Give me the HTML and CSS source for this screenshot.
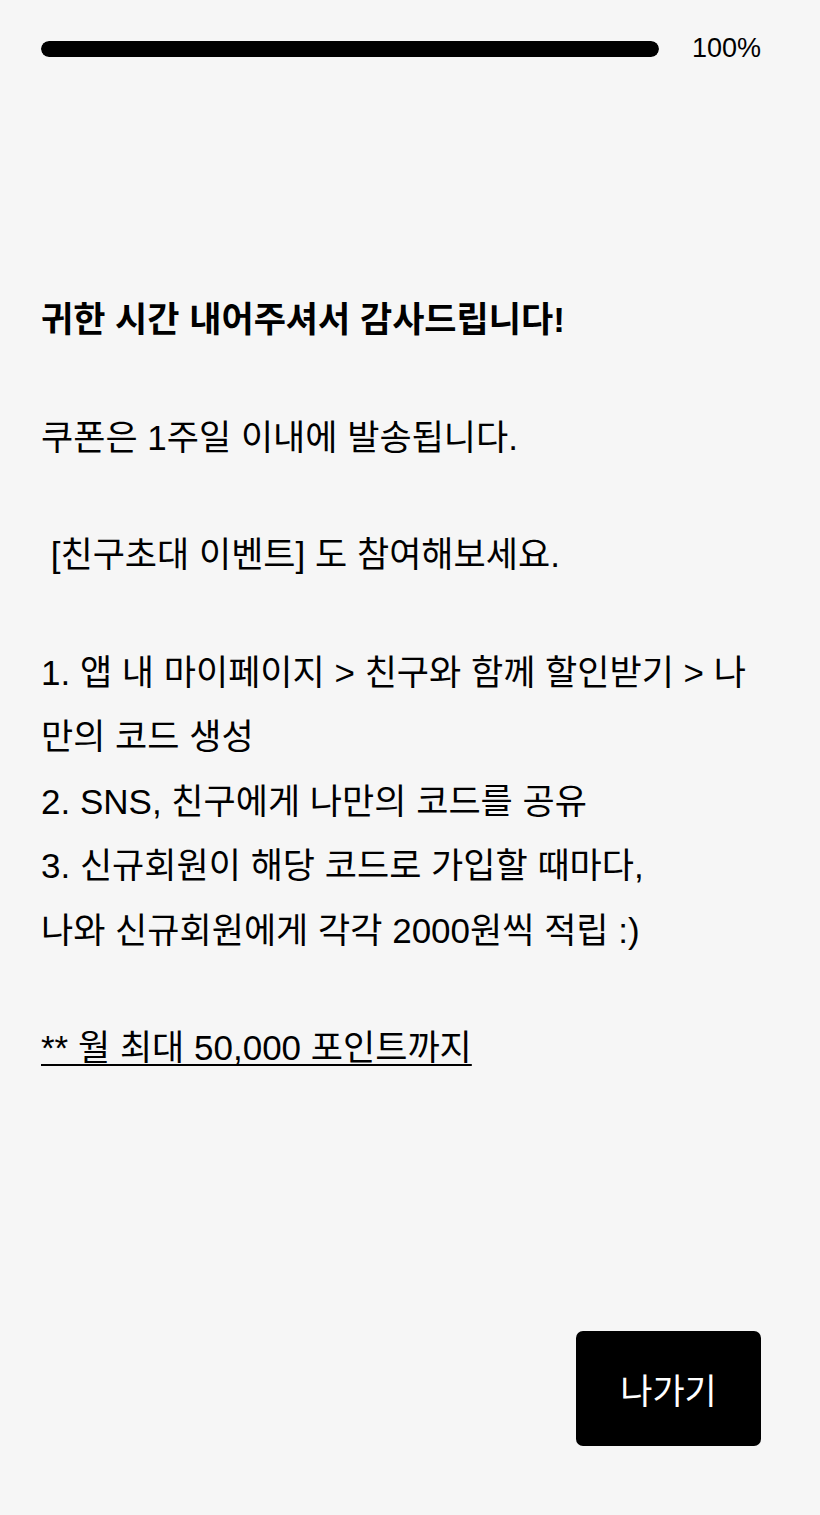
FILE: index.html
```html
<!DOCTYPE html>
<html lang="ko">
<head>
<meta charset="utf-8">
<title>완료</title>
<link rel="stylesheet" href="styles.css">
</head>
<body>
<div class="page">
  <div class="progress">
    <div class="track"><div class="fill" style="width:100%"></div></div>
    <span class="pct">100%</span>
  </div>

  <div class="content">
    <h1 class="title">귀한 시간 내어주셔서 감사드립니다!</h1>
    <p class="para">쿠폰은 1주일 이내에 발송됩니다.</p>
    <p class="para">&nbsp;[친구초대 이벤트] 도 참여해보세요.</p>
    <p class="para">1. 앱 내 마이페이지 &gt; 친구와 함께 할인받기 &gt; 나만의 코드 생성<br>2. SNS, 친구에게 나만의 코드를 공유<br>3. 신규회원이 해당 코드로 가입할 때마다,<br>나와 신규회원에게 각각 2000원씩 적립 :)</p>
    <p class="para note">** 월 최대 50,000 포인트까지</p>
  </div>

  <div class="actions">
    <button class="exit" type="button">나가기</button>
  </div>
</div>
</body>
</html>
```

FILE: styles.css
```css
html, body {
  margin: 0;
  padding: 0;
  background: #f6f6f6;
}

body {
  font-family: "Liberation Sans", "Noto Sans CJK KR", sans-serif;
  color: #000;
}

.page {
  box-sizing: border-box;
  min-height: 100vh;
  display: flex;
  flex-direction: column;
  padding: 35px 59px 69px 41px;
}

.progress {
  display: flex;
  align-items: center;
  gap: 33px;
  height: 27px;
}

.track {
  flex: 1;
  height: 16px;
  border-radius: 8px;
  background: #dcdcdc;
  overflow: hidden;
}

.fill {
  height: 100%;
  background: #000;
  border-radius: 8px;
}

.pct {
  font-size: 27px;
  line-height: 27px;
}

.content {
  margin-top: 226px;
}

.title {
  margin: 0 0 53px;
  font-size: 35px;
  font-weight: 700;
  line-height: 64.5px;
}

.para {
  margin: 0 0 53px;
  font-size: 35px;
  line-height: 64.5px;
}

.note {
  text-decoration: underline;
  text-underline-offset: 4px;
  text-decoration-thickness: 2px;
  margin-bottom: 0;
}

.actions {
  margin-top: auto;
  display: flex;
  justify-content: flex-end;
}

.exit {
  width: 185px;
  height: 115px;
  border: none;
  border-radius: 7px;
  background: #000;
  color: #fff;
  font-family: "Noto Sans CJK KR", sans-serif;
  font-size: 35px;
  font-weight: 400;
  cursor: pointer;
}
```
